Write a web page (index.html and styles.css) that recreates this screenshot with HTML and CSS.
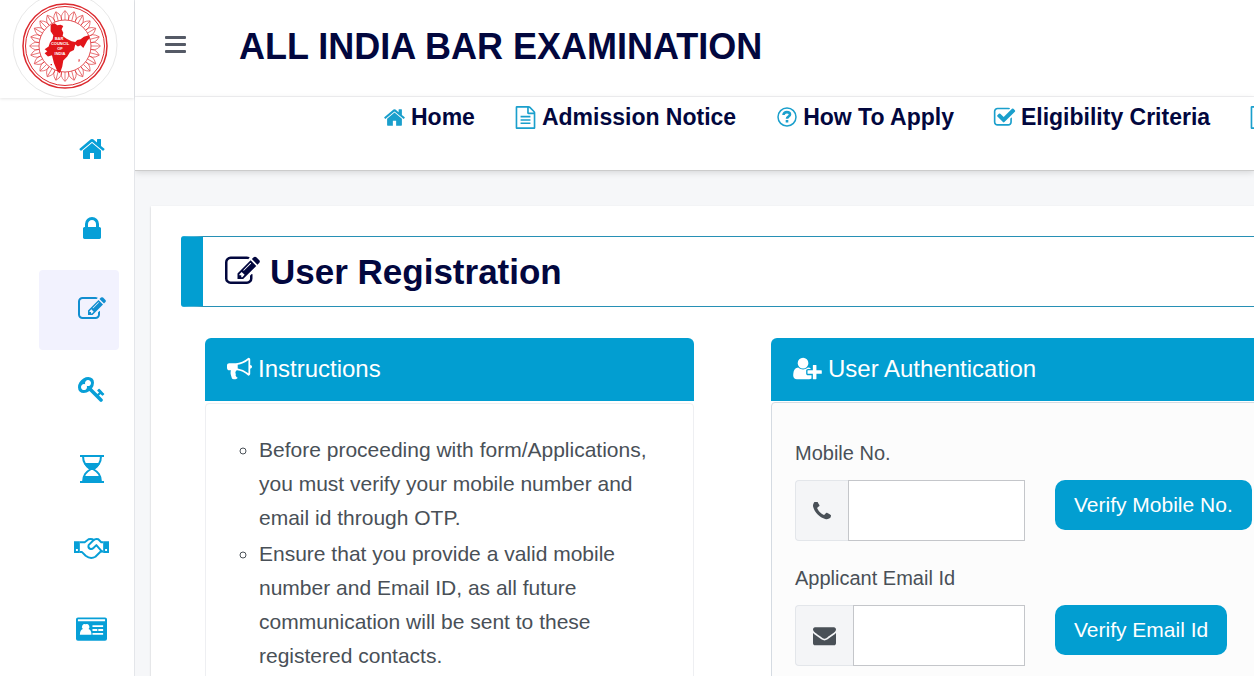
FILE: index.html
```html
<!DOCTYPE html>
<html lang="en">
<head>
    <meta charset="UTF-8">
    <meta name="viewport" content="width=device-width, initial-scale=1.0">
    <title>All India Bar Examination - User Registration</title>
    <link rel="stylesheet" href="styles.css">
</head>
<body>
    <div class="layout">
        <!-- Sidebar -->
        <aside class="sidebar">
            <a href="#" class="logo" aria-label="Bar Council of India">
                <svg viewBox="0 0 106 106">
                    <defs>
                        <path id="petal" d="M49.500 28q-1-4 1-6.500l2.500-3 2.500 3q2 2.500 1 6.500M53 19v9"/>
                        <g id="petals">
                            <use href="#petal"/>
                            <use href="#petal" transform="rotate(15 53 54)"/>
                            <use href="#petal" transform="rotate(30 53 54)"/>
                        </g>
                    </defs>
                    <circle cx="53" cy="53" r="52" fill="#fff" stroke="#e8e8e8"/>
                    <g fill="none" stroke="#dc2a2f">
                        <circle cx="53" cy="54" r="42" stroke-width="1.500"/>
                        <circle cx="53" cy="54" r="39.500" stroke-width="1"/>
                        <circle cx="53" cy="54" r="26" stroke-width=".8"/>
                        <g stroke-width=".6">
                            <use href="#petals"/>
                            <use href="#petals" transform="rotate(45 53 54)"/>
                            <use href="#petals" transform="rotate(90 53 54)"/>
                            <use href="#petals" transform="rotate(135 53 54)"/>
                            <use href="#petals" transform="rotate(180 53 54)"/>
                            <use href="#petals" transform="rotate(225 53 54)"/>
                            <use href="#petals" transform="rotate(270 53 54)"/>
                            <use href="#petals" transform="rotate(315 53 54)"/>
                        </g>
                    </g>
                    <path fill="#e2151a" transform="translate(-2 8) scale(.333)" d="M122 74l12-4 8 6 10-2 8 4-5 10 5 10-2 10 12 8 15 8 11 2 6-6 10-2 10-8 14-4 4 8-8 8-6 12-6 10-8-8-8 4-8-6-4 16-12 6-8 14-12 12-3 18-7 20-8-6-10-24-6-24-12 4-10-10 8-6-8-6 12-8 4-12 8-10 2-12-8-12zM206 178l3 0 0 6-3 2zM122 192l4 0 0 4-4 0z"/>
                    <g class="logo-text">
                        <text x="47" y="48">BAR</text>
                        <text x="48" y="53">COUNCIL</text>
                        <text x="48" y="58">OF</text>
                        <text x="48" y="63">INDIA</text>
                    </g>
                </svg>
            </a>
            <nav class="side-menu">
                <a href="#" class="side-link" aria-label="Home"><svg class="icon"><use href="#home"/></svg></a>
                <a href="#" class="side-link" aria-label="Login"><svg class="icon"><use href="#lock"/></svg></a>
                <a href="#" class="side-link active" aria-label="Registration"><svg class="icon"><use href="#edit"/></svg></a>
                <a href="#" class="side-link" aria-label="Forgot Password"><svg class="icon"><use href="#key"/></svg></a>
                <a href="#" class="side-link" aria-label="Important Dates"><svg class="icon"><use href="#hourglass"/></svg></a>
                <a href="#" class="side-link" aria-label="Help"><svg class="icon icon-hands"><use href="#handshake"/></svg></a>
                <a href="#" class="side-link" aria-label="Contact"><svg class="icon icon-id"><use href="#idcard"/></svg></a>
            </nav>
        </aside>

        <div class="main">
            <!-- Header -->
            <header class="header">
                <button type="button" class="menu-toggle" aria-label="Menu"><svg class="icon"><use href="#bars"/></svg></button>
                <h1>ALL INDIA BAR EXAMINATION</h1>
            </header>

            <nav class="top-nav">
                <a href="#"><svg class="icon"><use href="#home"/></svg> Home</a>
                <a href="#"><svg class="icon"><use href="#file"/></svg> Admission Notice</a>
                <a href="#"><svg class="icon"><use href="#question"/></svg> How To Apply</a>
                <a href="#"><svg class="icon"><use href="#check"/></svg> Eligibility Criteria</a>
                <a href="#" aria-label="Syllabus"><svg class="icon"><use href="#file"/></svg></a>
            </nav>

            <!-- Content -->
            <main class="content">
                <h2 class="page-title"><svg class="icon"><use href="#edit"/></svg> User Registration</h2>
                <div class="row">
                    <section class="card">
                        <h3 class="card-header"><svg class="icon"><use href="#bullhorn"/></svg> Instructions</h3>
                        <div class="card-body">
                            <ul class="instructions">
                                <li>Before proceeding with form/Applications, you must verify your mobile number and email id through OTP.</li>
                                <li>Ensure that you provide a valid mobile number and Email ID, as all future communication will be sent to these registered contacts.</li>
                            </ul>
                        </div>
                    </section>
                    <section class="card">
                        <h3 class="card-header"><svg class="icon icon-user"><use href="#userplus"/></svg> User Authentication</h3>
                        <form class="auth-form">
                            <label for="mobile">Mobile No.</label>
                            <div class="form-row">
                                <div class="input-group">
                                    <span class="addon"><svg class="icon icon-phone"><use href="#phone"/></svg></span>
                                    <input type="text" id="mobile">
                                </div>
                                <button type="button" class="btn">Verify Mobile No.</button>
                            </div>
                            <label for="email">Applicant Email Id</label>
                            <div class="form-row">
                                <div class="input-group">
                                    <span class="addon"><svg class="icon icon-mail"><use href="#envelope"/></svg></span>
                                    <input type="text" id="email">
                                </div>
                                <button type="button" class="btn">Verify Email Id</button>
                            </div>
                        </form>
                    </section>
                </div>
            </main>
        </div>
    </div>

    <!-- Icons -->
    <svg class="sprite">
        <symbol id="home" viewBox="0 0 1792 1792"><path d="M1472 992v480q0 26-19 45t-45 19h-384v-384h-256v384h-384q-26 0-45-19t-19-45v-480q0-1 .5-3t.5-3l575-474 575 474q1 2 1 6zm223-69l-62 74q-8 9-21 11h-3q-13 0-21-7l-692-577-692 577q-12 8-24 7-13-2-21-11l-62-74q-8-10-7-23.5t11-21.5l719-599q32-26 76-26t76 26l244 204v-195q0-14 9-23t23-9h192q14 0 23 9t9 23v408l219 182q10 8 11 21.5t-7 23.5z"/></symbol>
        <symbol id="lock" viewBox="0 0 1792 1792"><path d="M640 768h512v-192q0-106-75-181t-181-75-181 75-75 181v192zm832 96v576q0 40-28 68t-68 28h-960q-40 0-68-28t-28-68v-576q0-40 28-68t68-28h32v-192q0-184 132-316t316-132 316 132 132 316v192h32q40 0 68 28t28 68z"/></symbol>
        <symbol id="edit" viewBox="0 0 1792 1792"><path d="M888 1184l116-116-152-152-116 116v56h96v96h56zm440-720q-16-16-33 1l-350 350q-17 17-1 33t33-1l350-350q17-17 1-33zm80 594v190q0 119-84.5 203.5t-203.5 84.5h-832q-119 0-203.5-84.5t-84.5-203.5v-832q0-119 84.5-203.5t203.5-84.5h832q63 0 117 25 15 7 18 23 3 17-9 29l-49 49q-14 14-32 8-23-6-45-6h-832q-66 0-113 47t-47 113v832q0 66 47 113t113 47h832q66 0 113-47t47-113v-126q0-13 9-22l64-64q15-15 35-7t20 29zm-96-738l288 288-672 672h-288v-288zm444 132l-92 92-288-288 92-92q28-28 68-28t68 28l152 152q28 28 28 68t-28 68z"/></symbol>
        <symbol id="key" viewBox="0 0 1792 1792"><path d="M832 512q0-80-56-136t-136-56-136 56-56 136q0 42 19 83-41-19-83-19-80 0-136 56t-56 136 56 136 136 56 136-56 56-136q0-42-19-83 41 19 83 19 80 0 136-56t56-136zm851 704q0 17-49 66t-66 49q-9 0-28.5-16t-36.5-33-38.5-40-24.5-26l-96 96 220 220q28 28 28 68 0 42-39 81t-81 39q-40 0-68-28l-671-671q-176 131-365 131-163 0-265.5-102.5t-102.5-265.5q0-160 95-313t248-248 313-95q163 0 265.5 102.5t102.5 265.5q0 189-131 365l355 355 96-96q-3-3-26-24.5t-40-38.5-33-36.5-16-28.5q0-17 49-66t66-49q13 0 23 10 6 6 46 44.5t82 79.5 86.5 86 73 78 28.5 41z"/></symbol>
        <symbol id="hourglass" viewBox="0 0 28 28"><path d="M2 0h24v2H2zM2 26h24v2H2zM6 8h16c-1 3-3 5-6 7h-4c-3-2-5-4-6-7zM5 21h18v5H5z"/><path fill="none" stroke="currentColor" stroke-width="2" d="M5 1c0 7 3 10 8 13-5 3-8 6-8 13M23 1c0 7-3 10-8 13 5 3 8 6 8 13"/></symbol>
        <symbol id="handshake" viewBox="0 0 36 24"><path fill-rule="evenodd" d="M0 4h6v12H0zM2 12v2h2v-2zM30 4h6v12h-6zM32 12v2h2v-2z"/><g fill="none" stroke="currentColor" stroke-width="2" stroke-linejoin="round"><path d="M6 5h5l4-3q3-1 6 1"/><path d="M30 5h-2l-3-3q-3-1-5 1l-5 5c-1 4 3 5 5 3l3-3 6 7"/><path d="M6 15h2l4 4q5 4 10 1l6-6 2 1"/></g></symbol>
        <symbol id="idcard" viewBox="0 0 32 24"><path fill-rule="evenodd" d="M2 0h28a2 2 0 0 1 2 2v20a2 2 0 0 1-2 2H2a2 2 0 0 1-2-2V2a2 2 0 0 1 2-2zM2 2v2h28V2zM10 7a3 3 0 0 0-3 5q-3 1-3 6h12q0-5-3-6a3 3 0 0 0-3-5zM17 8v2h11V8zM17 12v2h5v-2zM23 12v2h5v-2zM17 16v2h11v-2z"/></symbol>
        <symbol id="bars" viewBox="0 0 22 22"><rect x="0" y="2" width="21" height="3" rx="1"/><rect x="0" y="9" width="21" height="3" rx="1"/><rect x="0" y="16" width="21" height="3" rx="1"/></symbol>
        <symbol id="file" viewBox="0 0 1792 1792"><path d="M1596 380q28 28 48 76t20 88v1152q0 40-28 68t-68 28h-1344q-40 0-68-28t-28-68v-1600q0-40 28-68t68-28h896q40 0 88 20t76 48zm-444-244v376h376q-10-29-22-41l-313-313q-12-12-41-22zm384 1528v-1024h-416q-40 0-68-28t-28-68v-416h-768v1536h1280zM512 768h768v128h-768zM512 1024h768v128h-768zM512 1280h768v128h-768z"/></symbol>
        <symbol id="question" viewBox="0 0 23 23"><g fill="none" stroke="currentColor"><circle cx="12" cy="11" r="9" stroke-width="1.500"/><path stroke-width="2.600" d="M8.500 9c0-4 6.500-3.500 6.500-.5 0 2-3 2-3 4.200M12 14v2.500"/></g></symbol>
        <symbol id="check" viewBox="0 0 1792 1792"><path d="M1472 930v318q0 119-84.500 203.500t-203.500 84.500h-832q-119 0-203.500-84.500t-84.500-203.500v-832q0-119 84.500-203.500t203.500-84.500h832q63 0 117 25 15 7 18 23 3 17-9 29l-49 49q-10 10-23 10-3 0-9-2-23-6-45-6h-832q-66 0-113 47t-47 113v832q0 66 47 113t113 47h832q66 0 113-47t47-113v-254q0-13 9-22l64-64q10-10 23-10 6 0 12 3 20 8 20 29zm231-489l-814 814q-24 24-57 24t-57-24l-430-430q-24-24-24-57t24-57l110-110q24-24 57-24t57 24l263 263 647-647q24-24 57-24t57 24l110 110q24 24 24 57t-24 57z"/></symbol>
        <symbol id="bullhorn" viewBox="0 0 1792 1792"><path d="M1664 640q53 0 90.500 37.500t37.500 90.500-37.500 90.500-90.500 37.500v384q0 52-38 90t-90 38q-417-347-812-380-58 19-91 66t-31 100.500 40 92.500q-20 33-23 65.500t6 58 33.500 55 48 50 61.500 50.500q-29 58-111.500 83t-168.500 11.500-132-55.500q-7-23-29.500-87.500t-32-94.500-23-89-15-101 3.500-98.500 22-110.500h-122q-66 0-113-47t-47-113v-192q0-66 47-113t113-47h480q435 0 896-384 52 0 90 38t38 90v384zm-128 604v-954q-394 302-768 343v270q377 42 768 341z"/></symbol>
        <symbol id="userplus" viewBox="0 0 2048 1792"><path d="M704 896q-159 0-271.500-112.500t-112.500-271.500 112.500-271.500 271.500-112.500 271.500 112.500 112.500 271.500-112.500 271.500-271.500 112.500zm960 128h352q13 0 22.500 9.500t9.500 22.500v192q0 13-9.500 22.500t-22.500 9.500h-352v352q0 13-9.500 22.500t-22.500 9.500h-192q-13 0-22.500-9.500t-9.500-22.500v-352h-352q-13 0-22.500-9.500t-9.500-22.500v-192q0-13 9.500-22.500t22.500-9.500h352v-352q0-13 9.500-22.500t22.500-9.500h192q13 0 22.500 9.500t9.500 22.500v352zm-736 224q0 52 38 90t90 38h256v238q-68 50-171 50h-874q-121 0-194-69t-73-190q0-53 3.500-103.500t14-109 26.500-108.500 43-97.500 62-81 85.500-53.500 111.500-20q19 0 39 17 79 61 154.500 91.500t164.500 30.500 164.500-30.500 154.500-91.500q20-17 39-17 132 0 217 96h-223q-52 0-90 38t-38 90v192z"/></symbol>
        <symbol id="phone" viewBox="192 192 1408 1408"><path d="M1600 1240q0 27-10 70.500t-21 68.500q-21 50-122 106-94 51-186 51-27 0-53-3.500t-57.500-12.500-47-14.500-55.500-20.500-49-18q-98-35-175-83-127-79-264-216t-216-264q-48-77-83-175-3-9-18-49t-20.500-55.500-14.500-47-12.500-57.500-3.500-53q0-92 51-186 56-101 106-122 25-11 68.500-21t70.500-10q14 0 21 3 18 6 53 76 11 19 30 54t35 63.500 31 53.500q3 4 17.500 25t21.500 35.500 7 28.500q0 20-28.500 50t-62 55-62 53-28.500 46q0 9 5 22.500t8.500 20.500 14 24 11.500 19q76 137 174 235t235 174q2 1 19 11.500t24 14 20.500 8.500 22.500 5q18 0 46-28.500t53-62 55-62 50-28.500q14 0 28.500 7t35.500 21.500 25 17.500q25 15 53.500 31t63.500 35 54 30q70 35 76 53 3 7 3 21z"/></symbol>
        <symbol id="envelope" viewBox="0 0 1792 1792"><path d="M1792 710v794q0 66-47 113t-113 47h-1472q-66 0-113-47t-47-113v-794q44 49 101 87 362 246 497 345 57 42 92.500 65.500t94.500 48 110 24.500h2q51 0 110-24.500t94.500-48 92.500-65.500q170-123 498-345 57-39 100-87zm0-294q0 79-49 151t-122 123q-376 261-468 325-10 7-42.500 31t-54 38.500-52 32.500-57.500 27-50 9h-2q-23 0-50-9t-57.500-27-52-32.500-54-38.500-42.500-31q-91-64-262-182.500t-205-142.500q-62-42-117-115.500t-55-136.500q0-78 41.500-130t118.500-52h1472q65 0 112.500 47t47.500 113z"/></symbol>
    </svg>
</body>
</html>
```
FILE: styles.css
```css
* {
    box-sizing: border-box;
}
body {
    margin: 0;
    font-family: "Liberation Sans", Arial, sans-serif;
    font-size: 20px;
    color: #495057;
    background-color: #f6f7f9;
}
h1, h2, h3 {
    margin: 0;
}
a {
    text-decoration: none;
}
.sprite {
    display: none;
}
.icon {
    width: 28px;
    height: 28px;
    fill: currentColor;
    flex-shrink: 0;
}
.layout {
    display: flex;
    height: 100vh;
    overflow: hidden;
}

/* Sidebar */
.sidebar {
    width: 135px;
    flex-shrink: 0;
    background-color: #fff;
    border-right: 1px solid #e4e6ea;
}
.logo {
    display: flex;
    align-items: flex-end;
    height: 98px;
    padding-left: 12px;
    overflow: hidden;
    box-shadow: 0 1px 3px rgba(0, 0, 0, 0.1);
}
.logo svg {
    width: 106px;
    height: 106px;
    flex-shrink: 0;
}
.logo-text {
    fill: #fff;
    font-size: 4px;
    font-weight: bold;
    text-anchor: middle;
}
.side-menu {
    padding: 12px 15px 0 39px;
}
.side-link {
    display: flex;
    align-items: center;
    justify-content: center;
    height: 80px;
    padding: 0 0 2px 25px;
    border-radius: 4px;
    color: #079fd7;
}
.side-link.active {
    background-color: #f2f2fe;
    color: #118ed0;
}
.icon-hands {
    width: 35px;
}
.icon-id {
    width: 31px;
}

/* Header */
.main {
    flex: 1;
    min-width: 0;
    overflow: hidden;
}
.header {
    display: flex;
    align-items: center;
    gap: 52px;
    height: 97px;
    padding: 0 30px 2px;
    background-color: #fff;
    border-bottom: 1px solid #f0f0f2;
}
.header h1 {
    font-size: 36px;
    color: #02073e;
}
.menu-toggle {
    display: flex;
    padding: 0 0 4px;
    border: 0;
    background: none;
    color: #555a66;
    cursor: pointer;
}
.menu-toggle .icon {
    width: 22px;
    height: 22px;
}
.top-nav {
    display: flex;
    gap: 39px;
    height: 74px;
    padding: 4px 0 0 248px;
    background-color: #fff;
    border-bottom: 1px solid #ccc;
    box-shadow: 0 2px 6px rgba(0, 0, 0, 0.12);
}
.top-nav a {
    display: flex;
    align-items: center;
    gap: 5px;
    height: 32px;
    white-space: nowrap;
    font-size: 23px;
    font-weight: bold;
    color: #02073e;
}
.top-nav .icon {
    width: 23px;
    height: 23px;
    color: #1a9fcc;
}

/* Content */
.content {
    margin: 35px -60px 0 16px;
    padding: 30px;
    min-height: 100vh;
    background-color: #fff;
    box-shadow: 0 1px 2px rgba(0, 0, 0, 0.2);
}
.page-title {
    display: flex;
    align-items: center;
    gap: 10px;
    height: 71px;
    padding-left: 22px;
    border: 1px solid #2790b5;
    border-left: 22px solid #029ed1;
    border-radius: 3px;
    font-size: 35px;
    color: #02073e;
}
.page-title .icon {
    width: 35px;
    height: 35px;
}
.row {
    display: grid;
    grid-template-columns: 1fr 1fr;
    gap: 77px;
    padding: 31px 24px 0;
}
.card-header {
    display: flex;
    align-items: center;
    gap: 6px;
    height: 63px;
    padding: 0 22px 2px;
    border-radius: 6px 6px 0 0;
    background-color: #029ed1;
    font-size: 24px;
    font-weight: normal;
    color: #fff;
}
.card-header .icon {
    width: 25px;
    height: 25px;
}
.card-header .icon-user {
    width: 29px;
}
.card-body {
    margin-top: 2px;
    padding: 29px 24px;
    border: 1px solid #eeeff2;
    border-radius: 4px;
}
.instructions {
    margin: 0;
    padding-left: 29px;
    list-style-type: circle;
    font-size: 21px;
    line-height: 34px;
}
.instructions li {
    margin-bottom: 2px;
}
.auth-form {
    margin-top: 1px;
    padding: 38px 0 38px 23px;
    border: 1px solid #d5dbe2;
    border-radius: 4px;
    background-color: #fcfcfc;
}
.auth-form label {
    display: block;
    margin-bottom: 15px;
    line-height: 24px;
}
.form-row {
    display: flex;
    align-items: flex-start;
    gap: 30px;
    margin-bottom: 25px;
}
.input-group {
    display: flex;
    width: 230px;
    height: 61px;
}
.addon {
    display: flex;
    align-items: center;
    padding: 0 17px;
    border: 1px solid #e3e6ea;
    border-right: 0;
    border-radius: 4px 0 0 4px;
    background-color: #f4f5f7;
}
.icon-phone {
    width: 18px;
    height: 18px;
}
.icon-mail {
    width: 23px;
    height: 23px;
}
.input-group input {
    flex: 1;
    min-width: 0;
    padding: 0 12px;
    border: 1px solid #c4c6ca;
    font: inherit;
    background-color: #fff;
}
.btn {
    height: 50px;
    padding: 0 19px;
    border: 0;
    border-radius: 10px;
    background-color: #029ed1;
    font-family: inherit;
    font-size: 21px;
    white-space: nowrap;
    color: #fff;
    cursor: pointer;
}
```
